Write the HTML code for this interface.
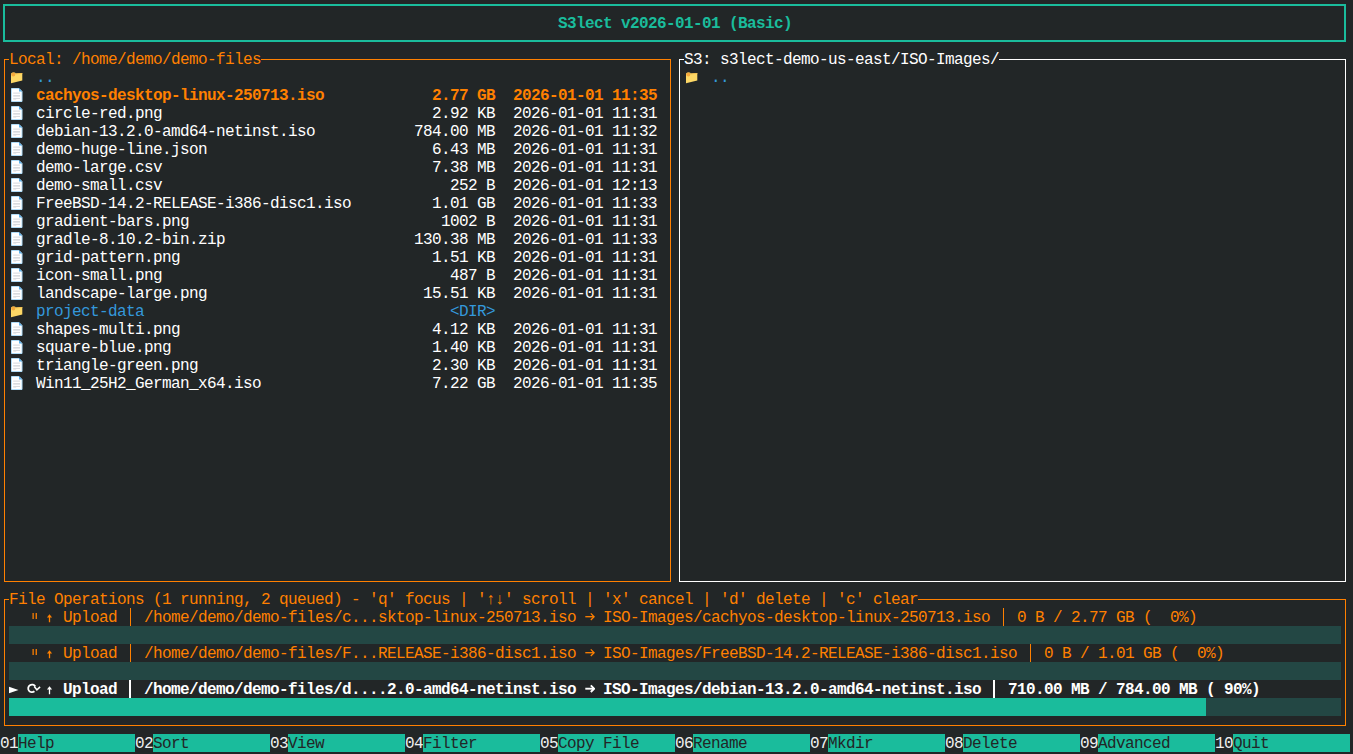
<!DOCTYPE html>
<html><head><meta charset="utf-8"><style>
html,body{margin:0;padding:0}
body{width:1353px;height:754px;background:#222627;position:relative;overflow:hidden;font-family:"Liberation Mono",monospace;font-size:16px;letter-spacing:-0.6016px}
.t{position:absolute;white-space:pre;line-height:18px;height:18px}
.r{position:absolute}
.ic{position:absolute}
.pause{position:absolute;width:6px;height:6px}
.pause i{position:absolute;top:0;width:2px;height:6px}
.pause i:first-child{left:0}
.pause i:last-child{left:4px}
</style></head><body>
<div class="r" style="left:3px;top:4px;width:1343px;height:2px;background:#1abc9c"></div>
<div class="r" style="left:3px;top:40px;width:1343px;height:2px;background:#1abc9c"></div>
<div class="r" style="left:3px;top:4px;width:2px;height:38px;background:#1abc9c"></div>
<div class="r" style="left:1344px;top:4px;width:2px;height:38px;background:#1abc9c"></div>
<div class="t" style="left:558px;top:15px;color:#1abc9c;font-weight:bold;">S3lect v2026-01-01 (Basic)</div>
<div class="r" style="left:4px;top:59px;width:667px;height:1px;background:#ff8000"></div>
<div class="r" style="left:4px;top:581px;width:667px;height:1px;background:#ff8000"></div>
<div class="r" style="left:4px;top:59px;width:1px;height:523px;background:#ff8000"></div>
<div class="r" style="left:670px;top:59px;width:1px;height:523px;background:#ff8000"></div>
<div class="r" style="left:679px;top:59px;width:667px;height:1px;background:#ffffff"></div>
<div class="r" style="left:679px;top:581px;width:667px;height:1px;background:#ffffff"></div>
<div class="r" style="left:679px;top:59px;width:1px;height:523px;background:#ffffff"></div>
<div class="r" style="left:1345px;top:59px;width:1px;height:523px;background:#ffffff"></div>
<div class="r" style="left:4px;top:599px;width:1342px;height:1px;background:#ff8000"></div>
<div class="r" style="left:4px;top:725px;width:1342px;height:1px;background:#ff8000"></div>
<div class="r" style="left:4px;top:599px;width:1px;height:127px;background:#ff8000"></div>
<div class="r" style="left:1345px;top:599px;width:1px;height:127px;background:#ff8000"></div>
<div class="t" style="left:9px;top:51px;color:#ff8000;background:#222627;">Local: /home/demo/demo-files</div>
<div class="t" style="left:684px;top:51px;color:#ffffff;background:#222627;">S3: s3lect-demo-us-east/ISO-Images/</div>
<svg class="ic" style="left:11px;top:72px" width="12" height="12" viewBox="0 0 12 12"><path d="M0 2 Q0 0.4 1.8 0.4 L3.4 0.4 Q4.4 0.4 4.8 1.6 L11.3 0.9 L11.3 8.4 L0 11.2 Z" fill="#fdd866"/><circle cx="2.3" cy="2.4" r="2" fill="#f4a83c"/><path d="M4.8 1.6 L11.3 0.9 L11.3 1.8 L4.6 2.5 Z" fill="#f8c050"/></svg>
<div class="t" style="left:36px;top:69px;color:#3498db;">..</div>
<svg class="ic" style="left:11px;top:88px" width="12" height="14" viewBox="0 0 12 14"><path d="M0.5 0.5 L8.0 0.5 L11.0 3.5 L11.0 13.5 L0.5 13.5 Z" fill="#ffffff" stroke="#b0dcf8" stroke-width="1"/><path d="M8.0 0.3 L11.2 3.5 L8.0 3.5 Z" fill="#58b0ec"/><rect x="2.2" y="4.6" width="6.8" height="1" fill="#d4d8dc"/><rect x="2.2" y="7.1" width="6.8" height="1.5" fill="#d4d8dc"/><rect x="2.2" y="9.9" width="6.8" height="1" fill="#d4d8dc"/><rect x="2.2" y="11" width="3" height="0.8" fill="#e4e6e8"/></svg>
<div class="t" style="left:36px;top:87px;color:#ff8000;font-weight:bold;">cachyos-desktop-linux-250713.iso</div>
<div class="t" style="left:432px;top:87px;color:#ff8000;font-weight:bold;">2.77 GB</div>
<div class="t" style="left:513px;top:87px;color:#ff8000;font-weight:bold;">2026-01-01 11:35</div>
<svg class="ic" style="left:11px;top:106px" width="12" height="14" viewBox="0 0 12 14"><path d="M0.5 0.5 L8.0 0.5 L11.0 3.5 L11.0 13.5 L0.5 13.5 Z" fill="#ffffff" stroke="#b0dcf8" stroke-width="1"/><path d="M8.0 0.3 L11.2 3.5 L8.0 3.5 Z" fill="#58b0ec"/><rect x="2.2" y="4.6" width="6.8" height="1" fill="#d4d8dc"/><rect x="2.2" y="7.1" width="6.8" height="1.5" fill="#d4d8dc"/><rect x="2.2" y="9.9" width="6.8" height="1" fill="#d4d8dc"/><rect x="2.2" y="11" width="3" height="0.8" fill="#e4e6e8"/></svg>
<div class="t" style="left:36px;top:105px;color:#ffffff;">circle-red.png</div>
<div class="t" style="left:432px;top:105px;color:#ffffff;">2.92 KB</div>
<div class="t" style="left:513px;top:105px;color:#ffffff;">2026-01-01 11:31</div>
<svg class="ic" style="left:11px;top:124px" width="12" height="14" viewBox="0 0 12 14"><path d="M0.5 0.5 L8.0 0.5 L11.0 3.5 L11.0 13.5 L0.5 13.5 Z" fill="#ffffff" stroke="#b0dcf8" stroke-width="1"/><path d="M8.0 0.3 L11.2 3.5 L8.0 3.5 Z" fill="#58b0ec"/><rect x="2.2" y="4.6" width="6.8" height="1" fill="#d4d8dc"/><rect x="2.2" y="7.1" width="6.8" height="1.5" fill="#d4d8dc"/><rect x="2.2" y="9.9" width="6.8" height="1" fill="#d4d8dc"/><rect x="2.2" y="11" width="3" height="0.8" fill="#e4e6e8"/></svg>
<div class="t" style="left:36px;top:123px;color:#ffffff;">debian-13.2.0-amd64-netinst.iso</div>
<div class="t" style="left:414px;top:123px;color:#ffffff;">784.00 MB</div>
<div class="t" style="left:513px;top:123px;color:#ffffff;">2026-01-01 11:32</div>
<svg class="ic" style="left:11px;top:142px" width="12" height="14" viewBox="0 0 12 14"><path d="M0.5 0.5 L8.0 0.5 L11.0 3.5 L11.0 13.5 L0.5 13.5 Z" fill="#ffffff" stroke="#b0dcf8" stroke-width="1"/><path d="M8.0 0.3 L11.2 3.5 L8.0 3.5 Z" fill="#58b0ec"/><rect x="2.2" y="4.6" width="6.8" height="1" fill="#d4d8dc"/><rect x="2.2" y="7.1" width="6.8" height="1.5" fill="#d4d8dc"/><rect x="2.2" y="9.9" width="6.8" height="1" fill="#d4d8dc"/><rect x="2.2" y="11" width="3" height="0.8" fill="#e4e6e8"/></svg>
<div class="t" style="left:36px;top:141px;color:#ffffff;">demo-huge-line.json</div>
<div class="t" style="left:432px;top:141px;color:#ffffff;">6.43 MB</div>
<div class="t" style="left:513px;top:141px;color:#ffffff;">2026-01-01 11:31</div>
<svg class="ic" style="left:11px;top:160px" width="12" height="14" viewBox="0 0 12 14"><path d="M0.5 0.5 L8.0 0.5 L11.0 3.5 L11.0 13.5 L0.5 13.5 Z" fill="#ffffff" stroke="#b0dcf8" stroke-width="1"/><path d="M8.0 0.3 L11.2 3.5 L8.0 3.5 Z" fill="#58b0ec"/><rect x="2.2" y="4.6" width="6.8" height="1" fill="#d4d8dc"/><rect x="2.2" y="7.1" width="6.8" height="1.5" fill="#d4d8dc"/><rect x="2.2" y="9.9" width="6.8" height="1" fill="#d4d8dc"/><rect x="2.2" y="11" width="3" height="0.8" fill="#e4e6e8"/></svg>
<div class="t" style="left:36px;top:159px;color:#ffffff;">demo-large.csv</div>
<div class="t" style="left:432px;top:159px;color:#ffffff;">7.38 MB</div>
<div class="t" style="left:513px;top:159px;color:#ffffff;">2026-01-01 11:31</div>
<svg class="ic" style="left:11px;top:178px" width="12" height="14" viewBox="0 0 12 14"><path d="M0.5 0.5 L8.0 0.5 L11.0 3.5 L11.0 13.5 L0.5 13.5 Z" fill="#ffffff" stroke="#b0dcf8" stroke-width="1"/><path d="M8.0 0.3 L11.2 3.5 L8.0 3.5 Z" fill="#58b0ec"/><rect x="2.2" y="4.6" width="6.8" height="1" fill="#d4d8dc"/><rect x="2.2" y="7.1" width="6.8" height="1.5" fill="#d4d8dc"/><rect x="2.2" y="9.9" width="6.8" height="1" fill="#d4d8dc"/><rect x="2.2" y="11" width="3" height="0.8" fill="#e4e6e8"/></svg>
<div class="t" style="left:36px;top:177px;color:#ffffff;">demo-small.csv</div>
<div class="t" style="left:450px;top:177px;color:#ffffff;">252 B</div>
<div class="t" style="left:513px;top:177px;color:#ffffff;">2026-01-01 12:13</div>
<svg class="ic" style="left:11px;top:196px" width="12" height="14" viewBox="0 0 12 14"><path d="M0.5 0.5 L8.0 0.5 L11.0 3.5 L11.0 13.5 L0.5 13.5 Z" fill="#ffffff" stroke="#b0dcf8" stroke-width="1"/><path d="M8.0 0.3 L11.2 3.5 L8.0 3.5 Z" fill="#58b0ec"/><rect x="2.2" y="4.6" width="6.8" height="1" fill="#d4d8dc"/><rect x="2.2" y="7.1" width="6.8" height="1.5" fill="#d4d8dc"/><rect x="2.2" y="9.9" width="6.8" height="1" fill="#d4d8dc"/><rect x="2.2" y="11" width="3" height="0.8" fill="#e4e6e8"/></svg>
<div class="t" style="left:36px;top:195px;color:#ffffff;">FreeBSD-14.2-RELEASE-i386-disc1.iso</div>
<div class="t" style="left:432px;top:195px;color:#ffffff;">1.01 GB</div>
<div class="t" style="left:513px;top:195px;color:#ffffff;">2026-01-01 11:33</div>
<svg class="ic" style="left:11px;top:214px" width="12" height="14" viewBox="0 0 12 14"><path d="M0.5 0.5 L8.0 0.5 L11.0 3.5 L11.0 13.5 L0.5 13.5 Z" fill="#ffffff" stroke="#b0dcf8" stroke-width="1"/><path d="M8.0 0.3 L11.2 3.5 L8.0 3.5 Z" fill="#58b0ec"/><rect x="2.2" y="4.6" width="6.8" height="1" fill="#d4d8dc"/><rect x="2.2" y="7.1" width="6.8" height="1.5" fill="#d4d8dc"/><rect x="2.2" y="9.9" width="6.8" height="1" fill="#d4d8dc"/><rect x="2.2" y="11" width="3" height="0.8" fill="#e4e6e8"/></svg>
<div class="t" style="left:36px;top:213px;color:#ffffff;">gradient-bars.png</div>
<div class="t" style="left:441px;top:213px;color:#ffffff;">1002 B</div>
<div class="t" style="left:513px;top:213px;color:#ffffff;">2026-01-01 11:31</div>
<svg class="ic" style="left:11px;top:232px" width="12" height="14" viewBox="0 0 12 14"><path d="M0.5 0.5 L8.0 0.5 L11.0 3.5 L11.0 13.5 L0.5 13.5 Z" fill="#ffffff" stroke="#b0dcf8" stroke-width="1"/><path d="M8.0 0.3 L11.2 3.5 L8.0 3.5 Z" fill="#58b0ec"/><rect x="2.2" y="4.6" width="6.8" height="1" fill="#d4d8dc"/><rect x="2.2" y="7.1" width="6.8" height="1.5" fill="#d4d8dc"/><rect x="2.2" y="9.9" width="6.8" height="1" fill="#d4d8dc"/><rect x="2.2" y="11" width="3" height="0.8" fill="#e4e6e8"/></svg>
<div class="t" style="left:36px;top:231px;color:#ffffff;">gradle-8.10.2-bin.zip</div>
<div class="t" style="left:414px;top:231px;color:#ffffff;">130.38 MB</div>
<div class="t" style="left:513px;top:231px;color:#ffffff;">2026-01-01 11:33</div>
<svg class="ic" style="left:11px;top:250px" width="12" height="14" viewBox="0 0 12 14"><path d="M0.5 0.5 L8.0 0.5 L11.0 3.5 L11.0 13.5 L0.5 13.5 Z" fill="#ffffff" stroke="#b0dcf8" stroke-width="1"/><path d="M8.0 0.3 L11.2 3.5 L8.0 3.5 Z" fill="#58b0ec"/><rect x="2.2" y="4.6" width="6.8" height="1" fill="#d4d8dc"/><rect x="2.2" y="7.1" width="6.8" height="1.5" fill="#d4d8dc"/><rect x="2.2" y="9.9" width="6.8" height="1" fill="#d4d8dc"/><rect x="2.2" y="11" width="3" height="0.8" fill="#e4e6e8"/></svg>
<div class="t" style="left:36px;top:249px;color:#ffffff;">grid-pattern.png</div>
<div class="t" style="left:432px;top:249px;color:#ffffff;">1.51 KB</div>
<div class="t" style="left:513px;top:249px;color:#ffffff;">2026-01-01 11:31</div>
<svg class="ic" style="left:11px;top:268px" width="12" height="14" viewBox="0 0 12 14"><path d="M0.5 0.5 L8.0 0.5 L11.0 3.5 L11.0 13.5 L0.5 13.5 Z" fill="#ffffff" stroke="#b0dcf8" stroke-width="1"/><path d="M8.0 0.3 L11.2 3.5 L8.0 3.5 Z" fill="#58b0ec"/><rect x="2.2" y="4.6" width="6.8" height="1" fill="#d4d8dc"/><rect x="2.2" y="7.1" width="6.8" height="1.5" fill="#d4d8dc"/><rect x="2.2" y="9.9" width="6.8" height="1" fill="#d4d8dc"/><rect x="2.2" y="11" width="3" height="0.8" fill="#e4e6e8"/></svg>
<div class="t" style="left:36px;top:267px;color:#ffffff;">icon-small.png</div>
<div class="t" style="left:450px;top:267px;color:#ffffff;">487 B</div>
<div class="t" style="left:513px;top:267px;color:#ffffff;">2026-01-01 11:31</div>
<svg class="ic" style="left:11px;top:286px" width="12" height="14" viewBox="0 0 12 14"><path d="M0.5 0.5 L8.0 0.5 L11.0 3.5 L11.0 13.5 L0.5 13.5 Z" fill="#ffffff" stroke="#b0dcf8" stroke-width="1"/><path d="M8.0 0.3 L11.2 3.5 L8.0 3.5 Z" fill="#58b0ec"/><rect x="2.2" y="4.6" width="6.8" height="1" fill="#d4d8dc"/><rect x="2.2" y="7.1" width="6.8" height="1.5" fill="#d4d8dc"/><rect x="2.2" y="9.9" width="6.8" height="1" fill="#d4d8dc"/><rect x="2.2" y="11" width="3" height="0.8" fill="#e4e6e8"/></svg>
<div class="t" style="left:36px;top:285px;color:#ffffff;">landscape-large.png</div>
<div class="t" style="left:423px;top:285px;color:#ffffff;">15.51 KB</div>
<div class="t" style="left:513px;top:285px;color:#ffffff;">2026-01-01 11:31</div>
<svg class="ic" style="left:11px;top:306px" width="12" height="12" viewBox="0 0 12 12"><path d="M0 2 Q0 0.4 1.8 0.4 L3.4 0.4 Q4.4 0.4 4.8 1.6 L11.3 0.9 L11.3 8.4 L0 11.2 Z" fill="#fdd866"/><circle cx="2.3" cy="2.4" r="2" fill="#f4a83c"/><path d="M4.8 1.6 L11.3 0.9 L11.3 1.8 L4.6 2.5 Z" fill="#f8c050"/></svg>
<div class="t" style="left:36px;top:303px;color:#3498db;">project-data</div>
<div class="t" style="left:450px;top:303px;color:#3498db;">&lt;DIR&gt;</div>
<svg class="ic" style="left:11px;top:322px" width="12" height="14" viewBox="0 0 12 14"><path d="M0.5 0.5 L8.0 0.5 L11.0 3.5 L11.0 13.5 L0.5 13.5 Z" fill="#ffffff" stroke="#b0dcf8" stroke-width="1"/><path d="M8.0 0.3 L11.2 3.5 L8.0 3.5 Z" fill="#58b0ec"/><rect x="2.2" y="4.6" width="6.8" height="1" fill="#d4d8dc"/><rect x="2.2" y="7.1" width="6.8" height="1.5" fill="#d4d8dc"/><rect x="2.2" y="9.9" width="6.8" height="1" fill="#d4d8dc"/><rect x="2.2" y="11" width="3" height="0.8" fill="#e4e6e8"/></svg>
<div class="t" style="left:36px;top:321px;color:#ffffff;">shapes-multi.png</div>
<div class="t" style="left:432px;top:321px;color:#ffffff;">4.12 KB</div>
<div class="t" style="left:513px;top:321px;color:#ffffff;">2026-01-01 11:31</div>
<svg class="ic" style="left:11px;top:340px" width="12" height="14" viewBox="0 0 12 14"><path d="M0.5 0.5 L8.0 0.5 L11.0 3.5 L11.0 13.5 L0.5 13.5 Z" fill="#ffffff" stroke="#b0dcf8" stroke-width="1"/><path d="M8.0 0.3 L11.2 3.5 L8.0 3.5 Z" fill="#58b0ec"/><rect x="2.2" y="4.6" width="6.8" height="1" fill="#d4d8dc"/><rect x="2.2" y="7.1" width="6.8" height="1.5" fill="#d4d8dc"/><rect x="2.2" y="9.9" width="6.8" height="1" fill="#d4d8dc"/><rect x="2.2" y="11" width="3" height="0.8" fill="#e4e6e8"/></svg>
<div class="t" style="left:36px;top:339px;color:#ffffff;">square-blue.png</div>
<div class="t" style="left:432px;top:339px;color:#ffffff;">1.40 KB</div>
<div class="t" style="left:513px;top:339px;color:#ffffff;">2026-01-01 11:31</div>
<svg class="ic" style="left:11px;top:358px" width="12" height="14" viewBox="0 0 12 14"><path d="M0.5 0.5 L8.0 0.5 L11.0 3.5 L11.0 13.5 L0.5 13.5 Z" fill="#ffffff" stroke="#b0dcf8" stroke-width="1"/><path d="M8.0 0.3 L11.2 3.5 L8.0 3.5 Z" fill="#58b0ec"/><rect x="2.2" y="4.6" width="6.8" height="1" fill="#d4d8dc"/><rect x="2.2" y="7.1" width="6.8" height="1.5" fill="#d4d8dc"/><rect x="2.2" y="9.9" width="6.8" height="1" fill="#d4d8dc"/><rect x="2.2" y="11" width="3" height="0.8" fill="#e4e6e8"/></svg>
<div class="t" style="left:36px;top:357px;color:#ffffff;">triangle-green.png</div>
<div class="t" style="left:432px;top:357px;color:#ffffff;">2.30 KB</div>
<div class="t" style="left:513px;top:357px;color:#ffffff;">2026-01-01 11:31</div>
<svg class="ic" style="left:11px;top:376px" width="12" height="14" viewBox="0 0 12 14"><path d="M0.5 0.5 L8.0 0.5 L11.0 3.5 L11.0 13.5 L0.5 13.5 Z" fill="#ffffff" stroke="#b0dcf8" stroke-width="1"/><path d="M8.0 0.3 L11.2 3.5 L8.0 3.5 Z" fill="#58b0ec"/><rect x="2.2" y="4.6" width="6.8" height="1" fill="#d4d8dc"/><rect x="2.2" y="7.1" width="6.8" height="1.5" fill="#d4d8dc"/><rect x="2.2" y="9.9" width="6.8" height="1" fill="#d4d8dc"/><rect x="2.2" y="11" width="3" height="0.8" fill="#e4e6e8"/></svg>
<div class="t" style="left:36px;top:375px;color:#ffffff;">Win11_25H2_German_x64.iso</div>
<div class="t" style="left:432px;top:375px;color:#ffffff;">7.22 GB</div>
<div class="t" style="left:513px;top:375px;color:#ffffff;">2026-01-01 11:35</div>
<svg class="ic" style="left:686px;top:72px" width="12" height="12" viewBox="0 0 12 12"><path d="M0 2 Q0 0.4 1.8 0.4 L3.4 0.4 Q4.4 0.4 4.8 1.6 L11.3 0.9 L11.3 8.4 L0 11.2 Z" fill="#fdd866"/><circle cx="2.3" cy="2.4" r="2" fill="#f4a83c"/><path d="M4.8 1.6 L11.3 0.9 L11.3 1.8 L4.6 2.5 Z" fill="#f8c050"/></svg>
<div class="t" style="left:711px;top:69px;color:#3498db;">..</div>
<div class="t" style="left:9px;top:591px;color:#ff8000;background:#222627;">File Operations (1 running, 2 queued) - &#x27;q&#x27; focus | &#x27;↑↓&#x27; scroll | &#x27;x&#x27; cancel | &#x27;d&#x27; delete | &#x27;c&#x27; clear</div>
<svg class="ic" style="left:32px;top:613px" width="6" height="7" viewBox="0 0 6 7"><rect x="0.5" y="0" width="1.25" height="6" fill="#ff8000"/><rect x="3.6" y="0" width="1.3" height="6" fill="#ff8000"/></svg>
<svg class="ic" style="left:46px;top:614px" width="7" height="9" viewBox="0 0 7 9"><path d="M3.5 0.2 L6.1 3.5 L4.15 3.5 L4.15 8.2 L2.85 8.2 L2.85 3.5 L0.9 3.5 Z" fill="#ff8000"/></svg>
<div class="t" style="left:63px;top:609px;color:#ff8000;">Upload</div>
<div class="t" style="left:144px;top:609px;color:#ff8000;">/home/demo/demo-files/c...sktop-linux-250713.iso   ISO-Images/cachyos-desktop-linux-250713.iso</div>
<svg class="ic" style="left:585px;top:612px" width="10" height="10" viewBox="0 0 10 10"><path d="M0.3 4.7 L9 4.7" stroke="#ff8000" stroke-width="1.3" fill="none"/><path d="M5.8 1.4 L9.1 4.7 L5.8 8" stroke="#ff8000" stroke-width="1.3" fill="none"/></svg>
<div class="t" style="left:1017px;top:609px;color:#ff8000;">0 B / 2.77 GB (  0%)</div>
<div class="r" style="left:130px;top:608px;width:1px;height:18px;background:#ff8000"></div>
<div class="r" style="left:1003px;top:608px;width:1px;height:18px;background:#ff8000"></div>
<div class="r" style="left:9px;top:626px;width:1332px;height:18px;background:#234744"></div>
<svg class="ic" style="left:32px;top:649px" width="6" height="7" viewBox="0 0 6 7"><rect x="0.5" y="0" width="1.25" height="6" fill="#ff8000"/><rect x="3.6" y="0" width="1.3" height="6" fill="#ff8000"/></svg>
<svg class="ic" style="left:46px;top:650px" width="7" height="9" viewBox="0 0 7 9"><path d="M3.5 0.2 L6.1 3.5 L4.15 3.5 L4.15 8.2 L2.85 8.2 L2.85 3.5 L0.9 3.5 Z" fill="#ff8000"/></svg>
<div class="t" style="left:63px;top:645px;color:#ff8000;">Upload</div>
<div class="t" style="left:144px;top:645px;color:#ff8000;">/home/demo/demo-files/F...RELEASE-i386-disc1.iso   ISO-Images/FreeBSD-14.2-RELEASE-i386-disc1.iso</div>
<svg class="ic" style="left:585px;top:648px" width="10" height="10" viewBox="0 0 10 10"><path d="M0.3 4.7 L9 4.7" stroke="#ff8000" stroke-width="1.3" fill="none"/><path d="M5.8 1.4 L9.1 4.7 L5.8 8" stroke="#ff8000" stroke-width="1.3" fill="none"/></svg>
<div class="t" style="left:1044px;top:645px;color:#ff8000;">0 B / 1.01 GB (  0%)</div>
<div class="r" style="left:130px;top:644px;width:1px;height:18px;background:#ff8000"></div>
<div class="r" style="left:1030px;top:644px;width:1px;height:18px;background:#ff8000"></div>
<div class="r" style="left:9px;top:662px;width:1332px;height:18px;background:#234744"></div>
<svg class="ic" style="left:9px;top:686px" width="10" height="8" viewBox="0 0 10 8"><path d="M0 0.8 L9.5 4 L0 7.2 Z" fill="#ffffff"/></svg>
<svg class="ic" style="left:24px;top:680px" width="18" height="16" viewBox="0 0 18 16"><path d="M10.44 11.31 A3.8 3.8 0 1 1 11.29 6.5" fill="none" stroke="#ffffff" stroke-width="1.8"/><path d="M10.2 6.6 L12.9 9.8 L16.1 6.9" fill="none" stroke="#ffffff" stroke-width="1.5"/></svg>
<svg class="ic" style="left:46px;top:686px" width="7" height="9" viewBox="0 0 7 9"><path d="M3.5 0.2 L6.1 3.5 L4.15 3.5 L4.15 8.2 L2.85 8.2 L2.85 3.5 L0.9 3.5 Z" fill="#ffffff"/></svg>
<div class="t" style="left:63px;top:681px;color:#ffffff;font-weight:bold;">Upload</div>
<div class="t" style="left:144px;top:681px;color:#ffffff;font-weight:bold;">/home/demo/demo-files/d....2.0-amd64-netinst.iso   ISO-Images/debian-13.2.0-amd64-netinst.iso</div>
<svg class="ic" style="left:585px;top:684px" width="10" height="10" viewBox="0 0 10 10"><path d="M0.3 4.7 L9 4.7" stroke="#ffffff" stroke-width="1.9" fill="none"/><path d="M5.8 1.4 L9.1 4.7 L5.8 8" stroke="#ffffff" stroke-width="1.9" fill="none"/></svg>
<div class="t" style="left:1008px;top:681px;color:#ffffff;font-weight:bold;">710.00 MB / 784.00 MB ( 90%)</div>
<div class="r" style="left:129px;top:680px;width:2px;height:18px;background:#ffffff"></div>
<div class="r" style="left:993px;top:680px;width:2px;height:18px;background:#ffffff"></div>
<div class="r" style="left:9px;top:698px;width:1332px;height:18px;background:#234744"></div>
<div class="r" style="left:9px;top:698px;width:1197px;height:18px;background:#1abc9c"></div>
<div class="t" style="left:0px;top:735px;color:#f0f0f0;">01</div>
<div class="r" style="left:18px;top:734px;width:117px;height:18px;background:#1abc9c"></div>
<div class="t" style="left:18px;top:735px;color:#222627;">Help</div>
<div class="t" style="left:135px;top:735px;color:#f0f0f0;">02</div>
<div class="r" style="left:153px;top:734px;width:117px;height:18px;background:#1abc9c"></div>
<div class="t" style="left:153px;top:735px;color:#222627;">Sort</div>
<div class="t" style="left:270px;top:735px;color:#f0f0f0;">03</div>
<div class="r" style="left:288px;top:734px;width:117px;height:18px;background:#1abc9c"></div>
<div class="t" style="left:288px;top:735px;color:#222627;">View</div>
<div class="t" style="left:405px;top:735px;color:#f0f0f0;">04</div>
<div class="r" style="left:423px;top:734px;width:117px;height:18px;background:#1abc9c"></div>
<div class="t" style="left:423px;top:735px;color:#222627;">Filter</div>
<div class="t" style="left:540px;top:735px;color:#f0f0f0;">05</div>
<div class="r" style="left:558px;top:734px;width:117px;height:18px;background:#1abc9c"></div>
<div class="t" style="left:558px;top:735px;color:#222627;">Copy File</div>
<div class="t" style="left:675px;top:735px;color:#f0f0f0;">06</div>
<div class="r" style="left:693px;top:734px;width:117px;height:18px;background:#1abc9c"></div>
<div class="t" style="left:693px;top:735px;color:#222627;">Rename</div>
<div class="t" style="left:810px;top:735px;color:#f0f0f0;">07</div>
<div class="r" style="left:828px;top:734px;width:117px;height:18px;background:#1abc9c"></div>
<div class="t" style="left:828px;top:735px;color:#222627;">Mkdir</div>
<div class="t" style="left:945px;top:735px;color:#f0f0f0;">08</div>
<div class="r" style="left:963px;top:734px;width:117px;height:18px;background:#1abc9c"></div>
<div class="t" style="left:963px;top:735px;color:#222627;">Delete</div>
<div class="t" style="left:1080px;top:735px;color:#f0f0f0;">09</div>
<div class="r" style="left:1098px;top:734px;width:117px;height:18px;background:#1abc9c"></div>
<div class="t" style="left:1098px;top:735px;color:#222627;">Advanced</div>
<div class="t" style="left:1215px;top:735px;color:#f0f0f0;">10</div>
<div class="r" style="left:1233px;top:734px;width:117px;height:18px;background:#1abc9c"></div>
<div class="t" style="left:1233px;top:735px;color:#222627;">Quit</div>
</body></html>
